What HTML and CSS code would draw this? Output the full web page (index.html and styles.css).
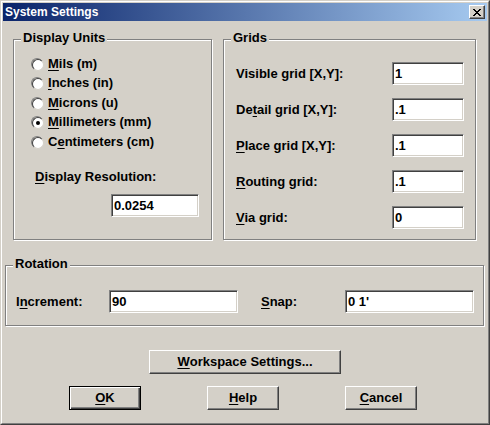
FILE: index.html
```html
<!DOCTYPE html>
<html>
<head>
<meta charset="utf-8">
<link rel="stylesheet" href="styles.css">
</head>
<body>
<div class="window">
  <div class="frame">
    <div class="titlebar">
      <span class="title">System Settings</span>
      <div class="close">
        <svg width="8" height="7" viewBox="0 0 8 7" shape-rendering="crispEdges">
          <path fill="#000" d="M0 0h2v1h-2zM6 0h2v1h-2zM1 1h2v1h-2zM5 1h2v1h-2zM2 2h4v1h-4zM3 3h2v1h-2zM2 4h4v1h-4zM1 5h2v1h-2zM5 5h2v1h-2zM0 6h2v1h-2zM6 6h2v1h-2z"/>
        </svg>
      </div>
    </div>
    <div class="content">
      <div class="top-row">
        <div class="group units">
          <div class="legend">Display Units</div>
          <div class="radios">
            <div class="radio-row"><span class="radio"></span><span><u>M</u>ils (m)</span></div>
            <div class="radio-row"><span class="radio"></span><span><u>I</u>nches (in)</span></div>
            <div class="radio-row"><span class="radio"></span><span><u>M</u>icrons (u)</span></div>
            <div class="radio-row"><span class="radio checked"></span><span><u>M</u>illimeters (mm)</span></div>
            <div class="radio-row"><span class="radio"></span><span>C<u>e</u>ntimeters (cm)</span></div>
          </div>
          <div class="res-label"><u>D</u>isplay Resolution:</div>
          <div class="field res-field">0.0254</div>
        </div>
        <div class="group grids">
          <div class="legend">Grids</div>
          <div class="grid-rows">
            <div class="grid-row"><span>Visible grid [X,Y]:</span><div class="field grid-field">1</div></div>
            <div class="grid-row"><span>De<u>t</u>ail grid [X,Y]:</span><div class="field grid-field">.1</div></div>
            <div class="grid-row"><span><u>P</u>lace grid [X,Y]:</span><div class="field grid-field">.1</div></div>
            <div class="grid-row"><span><u>R</u>outing grid:</span><div class="field grid-field">.1</div></div>
            <div class="grid-row"><span><u>V</u>ia grid:</span><div class="field grid-field">0</div></div>
          </div>
        </div>
      </div>
      <div class="group rotation">
        <div class="legend">Rotation</div>
        <div class="rot-row">
          <span class="rot-label">I<u>n</u>crement:</span>
          <div class="field rot-field">90</div>
          <span class="snap-label"><u>S</u>nap:</span>
          <div class="field rot-field">0 1'</div>
        </div>
      </div>
      <div class="ws-row"><div class="btn ws"><u>W</u>orkspace Settings...</div></div>
      <div class="btn-row">
        <div class="btn default"><u>O</u>K</div>
        <div class="btn"><u>H</u>elp</div>
        <div class="btn"><u>C</u>ancel</div>
      </div>
    </div>
  </div>
</div>
</body>
</html>
```
FILE: styles.css
```css
* { box-sizing: border-box; }
html, body { margin: 0; padding: 0; background: #d4d0c8; }
body {
  font-family: "Liberation Sans", Arial, sans-serif;
  font-weight: bold;
  font-size: 13px;
  color: #000;
  line-height: 16px;
}
u {
  text-decoration-thickness: 1px;
  text-underline-offset: 2px;
}
.window {
  width: 490px;
  height: 425px;
  border: 1px solid;
  border-color: #d4d0c8 #404040 #404040 #d4d0c8;
}
.frame {
  height: 100%;
  border: 1px solid;
  border-color: #fff #808080 #808080 #fff;
  padding: 1px;
}
.titlebar {
  height: 18px;
  background: linear-gradient(to right, #0a246a, #a6caf0);
  display: flex;
  justify-content: space-between;
  align-items: flex-start;
  padding-left: 2px;
}
.title {
  color: #fff;
  font-size: 12px;
  line-height: 18px;
}
.close {
  width: 16px;
  height: 14px;
  margin: 2px 2px 0 0;
  background: #d4d0c8;
  border: 1px solid;
  border-color: #fff #404040 #404040 #fff;
  box-shadow: inset -1px -1px #808080;
  display: flex;
  align-items: center;
  justify-content: center;
  padding-right: 1px;
}
.close svg { display: block; }
.content { padding: 18px 0 0 0; }
.top-row {
  display: flex;
  gap: 11px;
  padding-left: 10px;
}
.group {
  border: 1px solid #808080;
  box-shadow: inset 1px 1px #fff, 1px 1px #fff;
}
.legend {
  display: table;
  margin: -10px 0 0 7px;
  padding: 0 2px;
  background: #d4d0c8;
}
.units { width: 199px; height: 201px; }
.grids { width: 253px; height: 201px; }
.radios { margin-top: 8px; padding-left: 17px; }
.radio-row {
  display: flex;
  align-items: center;
  gap: 5px;
  height: 19.5px;
}
.radio {
  width: 12px;
  height: 12px;
  border-radius: 50%;
  border: 1px solid;
  border-color: #808080 #fff #fff #808080;
  position: relative;
  flex: none;
}
.radio::before {
  content: "";
  display: block;
  width: 10px;
  height: 10px;
  border-radius: 50%;
  border: 1px solid;
  border-color: #404040 #d4d0c8 #d4d0c8 #404040;
  background: #fff;
}
.radio.checked::after {
  content: "";
  position: absolute;
  left: 4px;
  top: 4px;
  width: 4px;
  height: 4px;
  border-radius: 50%;
  background: #000;
}
.res-label { margin: 17px 0 0 21px; }
.field {
  height: 23px;
  background: #fff;
  border: 1px solid;
  border-color: #808080 #fff #fff #808080;
  box-shadow: inset 1px 1px #404040, inset -1px -1px #d4d0c8;
  padding: 3px 0 0 2px;
  line-height: 16px;
}
.res-field { width: 88px; margin: 9px 0 0 97px; }
.grid-rows {
  margin-top: 16px;
  padding: 0 11px 0 12px;
  display: flex;
  flex-direction: column;
  gap: 13px;
}
.grid-row {
  display: flex;
  justify-content: space-between;
  align-items: center;
}
.grid-field { width: 72px; }
.rotation {
  margin: 25px 0 0 2px;
  width: 479px;
  height: 61px;
}
.rot-row {
  display: flex;
  align-items: center;
  margin-top: 18px;
  padding-left: 10px;
}
.rot-label { width: 93px; }
.rot-field { width: 129px; }
.snap-label { width: 84px; margin-left: 23px; }
.btn {
  height: 24px;
  width: 72px;
  border: 1px solid;
  border-color: #fff #404040 #404040 #fff;
  box-shadow: inset -1px -1px #808080;
  display: flex;
  align-items: center;
  justify-content: center;
}
.btn.default {
  border-color: #000;
  box-shadow: inset 1px 1px #fff, inset -1px -1px #404040, inset -2px -2px #808080;
}
.ws-row { margin-top: 24px; padding-left: 146px; }
.btn.ws { width: 192px; }
.btn-row {
  display: flex;
  gap: 66px;
  margin-top: 12px;
  padding-left: 66px;
}
```
